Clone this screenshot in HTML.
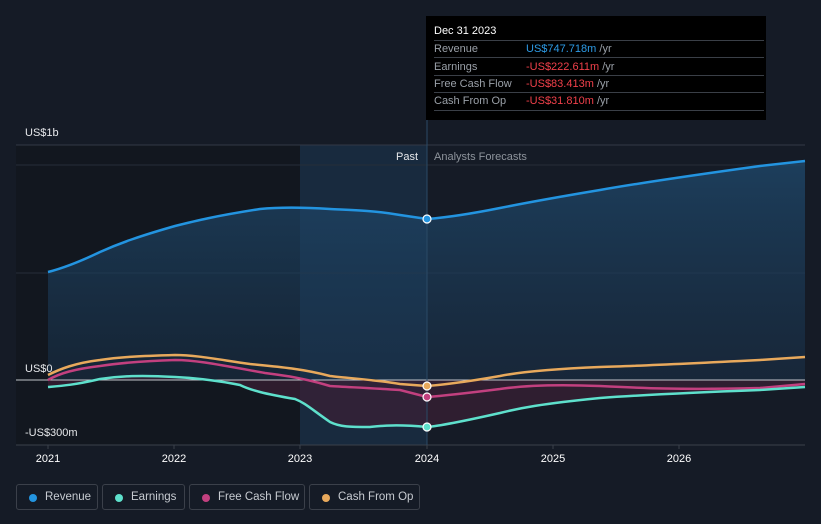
<!DOCTYPE html>
<html><head><style>
html,body{margin:0;padding:0;background:#151b26;width:821px;height:524px;overflow:hidden;font-family:"Liberation Sans",sans-serif}
.tt{position:absolute;left:426px;top:16px;width:340px;height:104px;background:#000;color:#fff;font-size:11px}
.tt .h{position:absolute;left:8px;top:9px;font-size:11px}
.tt .r{position:absolute;left:8px;width:330px;height:17px;border-top:1px solid #3a3f47;color:#9aa0a8}
.tt .r span{position:absolute;left:92px}
.leg{position:absolute;top:484px;height:26px;border:1px solid #3b404a;border-radius:3px;color:#c7cbd1;font-size:11.5px;line-height:26px;box-sizing:border-box}
.leg i{position:absolute;left:12px;top:9px;width:8px;height:8px;border-radius:50%}
.leg b{font-weight:normal;position:absolute;left:28px;top:-1px}
</style></head><body>
<svg width="821" height="524" style="position:absolute;left:0;top:0">
<defs><linearGradient id="rg" x1="0" y1="0" x2="0" y2="1"><stop offset="0" stop-color="#1f4a6e" stop-opacity=".75"/><stop offset="1" stop-color="#1a3550" stop-opacity=".45"/></linearGradient></defs>
<rect x="16" y="145" width="411" height="300" fill="#12171f"/>
<rect x="300" y="145" width="127" height="300" fill="#182a3e"/>
<line x1="16" y1="145" x2="805" y2="145" stroke="#323845"/>
<line x1="16" y1="165" x2="805" y2="165" stroke="#262d38"/>
<line x1="16" y1="273" x2="805" y2="273" stroke="#262d38"/>
<path d="M48,272 C60,269 75,264 100,252 C120,243 140,236 175,226 C195,221 215,216 260,209 C280,207 300,207 330,209 C350,210 370,210 400,215 L427,219 C440,218 460,216 500,208 C520,204 540,200 600,190 C640,183 680,177 760,166 L805,161 L805,380 L48,380Z" fill="url(#rg)"/>
<path d="M48,380 L805,380 L805,387 C760,390 680,393 600,398 C560,401 540,404 500,413 C480,418 460,422 427,427 C410,425 395,424 370,427 C360,428 340,427 330,422 C320,416 310,408 295,399 C280,395 265,394 240,385 C230,381 215,380 175,377 C160,376 140,375 100,379 C80,382 75,385 48,387Z" fill="#3a1f35" opacity=".7"/>
<line x1="16" y1="380" x2="805" y2="380" stroke="#c0c4ca" stroke-width="1"/>
<line x1="16" y1="445" x2="805" y2="445" stroke="#3a404b"/>
<line x1="427" y1="120" x2="427" y2="445" stroke="#2a4a66"/>
<path d="M48,375 C60,369 75,363 100,360 C120,357 140,356 175,355 C195,355 215,359 250,364 C270,366 300,368 330,376 C345,378 370,379 400,384 L427,386 C440,385 460,383 500,376 C520,372 550,369 600,367 C640,366 680,364 760,360 L805,357" fill="none" stroke="#e8a95c" stroke-width="2.5"/>
<path d="M48,380 C60,373 75,369 100,366 C120,363 140,361 175,360 C195,360 215,364 265,373 C280,375 300,377 330,386 C345,387 370,388 400,390 L427,397 C440,396 460,394 500,389 C520,386 550,384 600,386 C640,388 680,390 760,388 L805,384" fill="none" stroke="#c2407f" stroke-width="2.5"/>
<path d="M48,387 C60,386 75,385 100,379 C120,376 140,375 175,377 C195,378 215,380 240,385 C250,390 265,394 295,399 C305,403 310,408 330,422 C340,427 350,427 370,427 C380,426 395,424 427,427 C440,426 460,422 500,413 C520,408 540,404 600,398 C640,395 680,393 760,390 L805,387" fill="none" stroke="#5ee0cc" stroke-width="2.5"/>
<path d="M48,272 C60,269 75,264 100,252 C120,243 140,236 175,226 C195,221 215,216 260,209 C280,207 300,207 330,209 C350,210 370,210 400,215 L427,219 C440,218 460,216 500,208 C520,204 540,200 600,190 C640,183 680,177 760,166 L805,161" fill="none" stroke="#2394e0" stroke-width="2.5"/>
<circle cx="427" cy="219" r="4" fill="#2394e0" stroke="#fff" stroke-width="1.2"/>
<circle cx="427" cy="386" r="4" fill="#e8a95c" stroke="#fff" stroke-width="1.2"/>
<circle cx="427" cy="397" r="4" fill="#c2407f" stroke="#fff" stroke-width="1.2"/>
<circle cx="427" cy="427" r="4" fill="#5ee0cc" stroke="#fff" stroke-width="1.2"/>
<g stroke="#3a404b"><line x1="48" y1="445" x2="48" y2="449"/><line x1="174" y1="445" x2="174" y2="449"/><line x1="300" y1="445" x2="300" y2="449"/><line x1="427" y1="445" x2="427" y2="449"/><line x1="553" y1="445" x2="553" y2="449"/><line x1="679" y1="445" x2="679" y2="449"/></g>
<g font-family="Liberation Sans,sans-serif" font-size="11" fill="#fff" text-anchor="middle">
<text x="48" y="462">2021</text><text x="174" y="462">2022</text><text x="300" y="462">2023</text><text x="427" y="462">2024</text><text x="553" y="462">2025</text><text x="679" y="462">2026</text></g>
<g font-family="Liberation Sans,sans-serif" font-size="11" fill="#e6e8eb">
<text x="25" y="136">US$1b</text><text x="25" y="372">US$0</text><text x="25" y="436">-US$300m</text>
<text x="418" y="160" text-anchor="end">Past</text><text x="434" y="160" fill="#8e949c">Analysts Forecasts</text></g>
</svg>
<div class="tt"><div class="h">Dec 31 2023</div>
<div class="r" style="top:24px"><div style="position:absolute;top:2px">Revenue</div><span style="top:2px;color:#2d9be6">US$747.718m <em style="font-style:normal;color:#9aa0a8">/yr</em></span></div>
<div class="r" style="top:41px"><div style="position:absolute;top:3px">Earnings</div><span style="top:3px;color:#f0404a">-US$222.611m <em style="font-style:normal;color:#9aa0a8">/yr</em></span></div>
<div class="r" style="top:59px"><div style="position:absolute;top:2px">Free Cash Flow</div><span style="top:2px;color:#f0404a">-US$83.413m <em style="font-style:normal;color:#9aa0a8">/yr</em></span></div>
<div class="r" style="top:76px;height:17px;border-bottom:1px solid #3a3f47"><div style="position:absolute;top:2px">Cash From Op</div><span style="top:2px;color:#f0404a">-US$31.810m <em style="font-style:normal;color:#9aa0a8">/yr</em></span></div>
</div>
<div class="leg" style="left:16px;width:82px"><i style="background:#2394e0"></i><b>Revenue</b></div>
<div class="leg" style="left:102px;width:83px"><i style="background:#5ee0cc"></i><b>Earnings</b></div>
<div class="leg" style="left:189px;width:116px"><i style="background:#c2407f"></i><b>Free Cash Flow</b></div>
<div class="leg" style="left:309px;width:111px"><i style="background:#e8a95c"></i><b>Cash From Op</b></div>
</body></html>
